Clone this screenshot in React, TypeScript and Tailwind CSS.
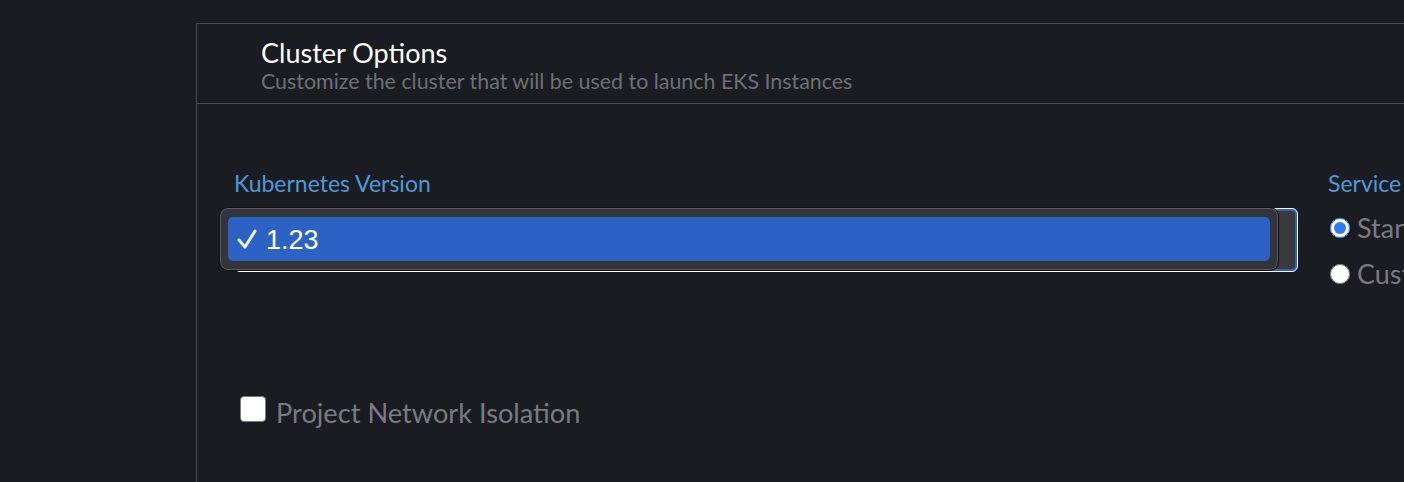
import { useState } from 'react';

const lato = { fontFamily: 'Lato, "Open Sans", sans-serif' };

const App = () => {
  const [serviceRole, setServiceRole] = useState<'standard' | 'custom'>('standard');
  const [isolation, setIsolation] = useState(false);

  return (
    <div className="h-[482px] w-[1404px] overflow-hidden bg-[#1b1c21]" style={lato}>
      <div className="ml-[196px] mt-[23px] h-[600px] w-[1400px] border-l border-t border-[#4b4c52]">
        {/* Header */}
        <div className="flex h-[80px] flex-col border-b border-[#4b4c52] pl-[64px] pt-[13px]">
          <h2 className="text-[27px] leading-[32px] text-white">Cluster Options</h2>
          <p className="text-[21.4px] leading-[24px] text-[#6e6f76]">
            Customize the cluster that will be used to launch EKS Instances
          </p>
        </div>

        {/* Body */}
        <div className="pl-[37px] pt-[66px]">
          <div className="flex gap-[30px]">
            <div className="flex w-[1064px] flex-col gap-[12px]">
              <label className="text-[23px] leading-[26px] text-[#4b9ad8]">Kubernetes Version</label>
              <div className="relative h-[64px]">
                <div className="h-full w-full rounded-[6px] border border-white bg-[#2c62c4] p-[2px]">
                  <div className="h-full w-full rounded-[4px] bg-[#3a3a3e]" />
                </div>
                {/* open native menu */}
                <div className="absolute left-[-15px] top-[-1px] h-[64px] w-[1060px] rounded-[9px] border border-[#101114] bg-[#34353b] px-[8px] pb-[7px] pt-[9px] shadow-[inset_0_0_0_1px_#5c5d63]">
                  <div className="flex h-[44px] items-center gap-[9px] rounded-[5px] bg-[#2d62c5] pl-[9px] text-[27px] text-white" style={{ fontFamily: '"Liberation Sans", Arial, sans-serif' }}>
                    <svg width="20" height="20" viewBox="0 0 20 20" fill="none">
                      <path d="M2 11 L8 18 L18 2" stroke="#eef2fb" strokeWidth="3" strokeLinecap="round" strokeLinejoin="round" />
                    </svg>
                    <span className="pt-[2px]">1.23</span>
                  </div>
                </div>
              </div>
            </div>

            <div className="flex flex-col gap-[12px]">
              <label className="whitespace-nowrap text-[23px] leading-[26px] text-[#4b9ad8]">Service Role</label>
              <div className="flex flex-col gap-[10px] pl-[2px] pt-[2px]">
                <label className="flex items-center gap-[7px] whitespace-nowrap text-[27px] leading-[36px] text-[#7a7b82]">
                  <input
                    type="radio"
                    name="role"
                    checked={serviceRole === 'standard'}
                    onChange={() => setServiceRole('standard')}
                    className="h-[20px] w-[20px] accent-[#2f7bf6]"
                  />
                  Standard
                </label>
                <label className="flex items-center gap-[7px] whitespace-nowrap text-[27px] leading-[36px] text-[#7a7b82]">
                  <input
                    type="radio"
                    name="role"
                    checked={serviceRole === 'custom'}
                    onChange={() => setServiceRole('custom')}
                    className="h-[20px] w-[20px] accent-[#2f7bf6]"
                  />
                  Custom
                </label>
              </div>
            </div>
          </div>

          <label className="ml-[6px] mt-[104px] flex items-start gap-[10px] text-[27.2px] leading-[32px] text-[#7a7b82]">
            <input
              type="checkbox"
              checked={isolation}
              onChange={() => setIsolation(!isolation)}
              className="h-[26px] w-[26px] appearance-none rounded-[4px] border border-[#7a7b82] bg-white"
            />
            <span className="mt-[1px]">Project Network Isolation</span>
          </label>
        </div>
      </div>
    </div>
  );
};

export default App;
